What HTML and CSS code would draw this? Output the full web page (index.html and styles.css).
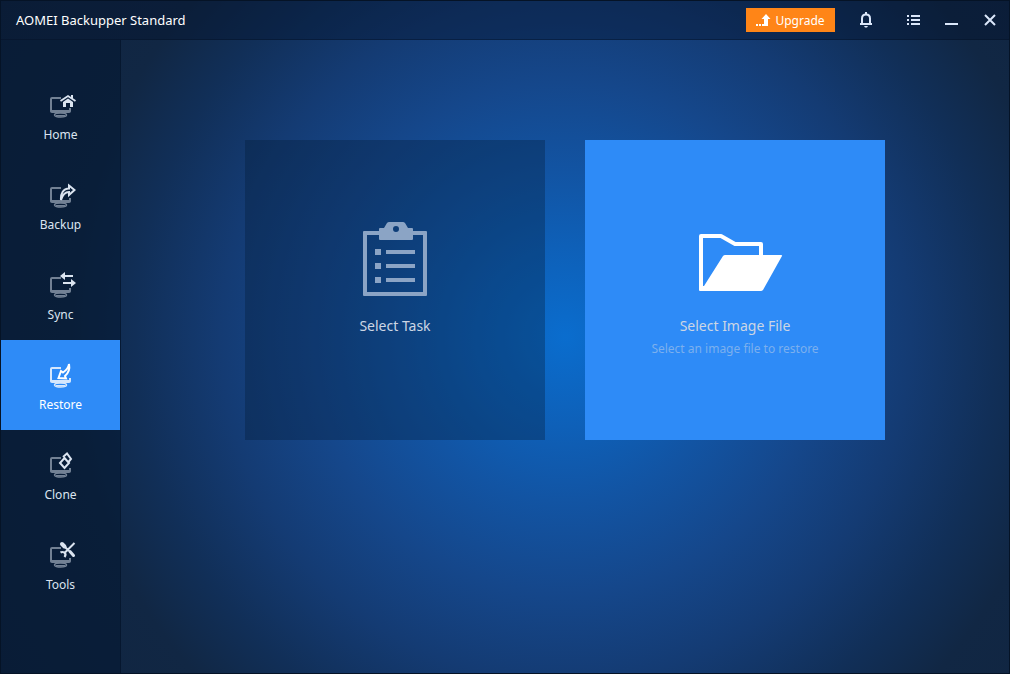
FILE: index.html
```html
<!DOCTYPE html>
<html lang="en">
<head>
<meta charset="utf-8">
<title>AOMEI Backupper Standard</title>
<link rel="stylesheet" href="styles.css">
</head>
<body>
<svg class="defs" aria-hidden="true">
  <symbol id="monitor" viewBox="0 0 31 30">
    <path d="M16 8H7Q6 8 6 9V20Q6 21 7 21H24Q25 21 25 20V18" fill="none" stroke="currentColor" stroke-width="2"/>
    <path d="M5 20H26V21Q26 23 24 23H7Q5 23 5 21Z" fill="currentColor"/>
    <ellipse cx="15.500" cy="25" rx="6" ry="2" fill="none" stroke="currentColor" stroke-width="1.500"/>
    <path d="M11 25H20V26.500H11z" fill="currentColor"/>
  </symbol>
</svg>
<div class="window">
  <header class="titlebar">
    <h1 class="title">AOMEI Backupper Standard</h1>
    <button class="upgrade" type="button">
      <svg width="15" height="14" viewBox="0 0 15 14" aria-hidden="true"><path d="M0 11h2v2H0zM3 11h2v2H3zM6 11H8V6H5.500L10 1L14.500 6H12V13H6z" fill="#fff"/></svg>
      Upgrade
    </button>
    <button class="tool bell" type="button" aria-label="Notifications">
      <svg width="14" height="16" viewBox="0 0 14 16"><path d="M3 11.500V6.500C3 4 4.500 2.500 7 2.500S11 4 11 6.500V11.500" fill="none" stroke="currentColor" stroke-width="2"/><path d="M6 0H8V2H6zM1 11H13V13H1zM5 14H9L8 15.500H6z" fill="currentColor"/></svg>
    </button>
    <button class="tool" type="button" aria-label="Menu">
      <svg width="14" height="12" viewBox="0 0 14 12"><path d="M0 1H2V3H0zM4 1H13V3H4zM0 5H2V7H0zM4 5H13V7H4zM0 9H2V11H0zM4 9H13V11H4z" fill="currentColor"/></svg>
    </button>
    <button class="tool" type="button" aria-label="Minimize">
      <svg width="14" height="12" viewBox="0 0 14 12"><path d="M0 9H13V11H0z" fill="currentColor"/></svg>
    </button>
    <button class="tool" type="button" aria-label="Close">
      <svg width="14" height="12" viewBox="0 0 14 12"><path d="M2 1L12 11M12 1L2 11" stroke="currentColor" stroke-width="2"/></svg>
    </button>
  </header>
  <div class="body">
    <nav class="sidebar">
      <a class="item" href="#home">
        <svg class="icon" viewBox="0 0 31 30" aria-hidden="true"><use class="dim" href="#monitor"/><path d="M15.500 11L23 6L30.500 11" fill="none" stroke="currentColor" stroke-width="1.800"/><path d="M26 5H28V9H26zM23 8.500L28 12V17H25V13H21V17H18V12z" fill="currentColor"/></svg>
        <span>Home</span>
      </a>
      <a class="item" href="#backup">
        <svg class="icon" viewBox="0 0 31 30" aria-hidden="true"><use class="dim" href="#monitor"/><path d="M24 5.500L29.500 10L24 15V12C20 12 17.500 15 16 20C15.500 14 18 8.500 24 8.500Z" fill="none" stroke="currentColor" stroke-width="2"/></svg>
        <span>Backup</span>
      </a>
      <a class="item" href="#sync">
        <svg class="icon" viewBox="0 0 31 30" aria-hidden="true"><use class="dim" href="#monitor"/><path d="M15 6L20 2V5H28V7H20V10zM31 13L26 9V12H18V14H26V17z" fill="currentColor"/></svg>
        <span>Sync</span>
      </a>
      <a class="item active" href="#restore" aria-current="page">
        <svg class="icon" viewBox="0 0 31 30" aria-hidden="true"><use class="dim" href="#monitor"/><path d="M24 4C23.500 8 21 10.500 18 12.500L16 11L13.500 18L21 18.500L20 16C23.500 13 25 9 24 4Z" fill="none" stroke="currentColor" stroke-width="2"/></svg>
        <span>Restore</span>
      </a>
      <a class="item" href="#clone">
        <svg class="icon" viewBox="0 0 31 30" aria-hidden="true"><use class="dim" href="#monitor"/><path d="M19.500 8L24 13L19.500 18L15 13ZM18 7L22 3.500L26 9L23.500 12" fill="none" stroke="currentColor" stroke-width="2"/></svg>
        <span>Clone</span>
      </a>
      <a class="item" href="#tools">
        <svg class="icon" viewBox="0 0 31 30" aria-hidden="true"><use class="dim" href="#monitor"/><path d="M17 4L19.500 6.500" stroke="currentColor" stroke-width="4" stroke-linecap="round"/><path d="M19 6L24 11M29.500 3L20 12.500" stroke="currentColor" stroke-width="2"/><path d="M25 11.500L28.500 15.500" stroke="currentColor" stroke-width="3" stroke-linecap="round"/><path d="M15.500 12.500Q17 11.500 19.500 12.500Q21.500 14.500 19.500 17" fill="none" stroke="currentColor" stroke-width="2.200"/></svg>
        <span>Tools</span>
      </a>
    </nav>
    <main class="content">
      <button class="card" type="button">
        <svg class="art faded" viewBox="0 0 96 80" aria-hidden="true">
          <path d="M32 12H17Q16 12 16 13V76Q16 77 17 77H79Q80 77 80 76V13Q80 12 79 12H66V10Q66 9 65 9H61L58 4Q57 3 56 3H42Q41 3 40 4L37 9H33Q32 9 32 10ZM20 16H32V20Q32 21 33 21H65Q66 21 66 20V16H76V73H20ZM49 7A3 3 0 1 1 49 13A3 3 0 1 1 49 7Z" fill="currentColor" fill-rule="evenodd"/>
          <path d="M28 30H34V36H28zM39 31H68V35H39zM28 44H34V50H28zM39 45H68V49H39zM28 58H34V64H28zM39 59H68V63H39z" fill="currentColor"/>
        </svg>
        <span class="label">Select Task</span>
      </button>
      <button class="card primary" type="button">
        <svg class="art" viewBox="0 0 96 80" aria-hidden="true">
          <path d="M74 37V25H48L34 17H14V70" fill="none" stroke="currentColor" stroke-width="4" stroke-linejoin="round"/>
          <path d="M38 36H94Q95.500 36 95 37L76 71Q75 72 74 72H13Q12 72 12 71V67H17L36 37Q37 36 38 36Z" fill="currentColor"/>
        </svg>
        <span class="label">Select Image File</span>
        <span class="hint">Select an image file to restore</span>
      </button>
    </main>
  </div>
</div>
</body>
</html>
```
FILE: styles.css
```css
* { box-sizing: border-box; }
body {
  margin: 0;
  font-family: "Noto Sans", "Open Sans", sans-serif;
  color: #fff;
}
button {
  border: 0;
  padding: 0;
  background: none;
  font: inherit;
  color: inherit;
}
svg { display: block; }
.defs { display: none; }
.window {
  display: flex;
  flex-direction: column;
  min-height: 100vh;
  border: 1px solid #051326;
  background: radial-gradient(circle at 56% 50%, #0a6dce 0, #0e60b8 90px, #1254a3 165px, #15478b 255px, #143b73 345px, #112f58 430px, #112744 500px, #10243f 100%);
}
.titlebar {
  display: flex;
  align-items: center;
  height: 39px;
  padding: 0 12px 0 15px;
  background: rgba(3, 18, 42, 0.4);
  border-bottom: 1px solid rgba(3, 16, 36, 0.4);
}
.title {
  flex: 1;
  margin: 0;
  font-size: 13px;
  font-weight: 400;
}
.upgrade {
  display: flex;
  align-items: center;
  justify-content: center;
  gap: 4px;
  width: 89px;
  height: 24px;
  background: #ff8517;
  font-size: 12px;
}
.tool { color: #dbe7fa; margin-left: 24px; }
.bell { margin-right: 10px; }
.body { display: flex; flex: 1; }
.sidebar {
  width: 120px;
  padding-top: 30px;
  background: rgba(3, 24, 48, 0.56);
  border-right: 1px solid rgba(3, 16, 36, 0.4);
}
.item {
  display: flex;
  flex-direction: column;
  align-items: center;
  gap: 6px;
  height: 90px;
  padding-top: 20px;
  color: #dbe4f0;
  font-size: 12px;
  line-height: 18px;
  text-decoration: none;
}
.icon { width: 31px; height: 30px; }
.dim { opacity: 0.5; }
.active { background: #2e8bf7; color: #fff; }
.active .dim { opacity: 0.8; }
.content {
  display: flex;
  flex: 1;
  justify-content: center;
  align-items: flex-start;
  gap: 40px;
  padding-top: 100px;
}
.card {
  display: flex;
  flex-direction: column;
  align-items: center;
  width: 300px;
  height: 300px;
  padding-top: 79px;
  background: rgba(4, 24, 50, 0.32);
}
.primary { background: #2e8bf7; }
.art { width: 96px; height: 80px; }
.faded { color: #8ba4c5; }
.label {
  margin-top: 16px;
  font-size: 14px;
  line-height: 22px;
  color: #ccd6e4;
}
.hint {
  margin-top: 2px;
  font-size: 12px;
  line-height: 20px;
  color: #7cb0ee;
}
```
